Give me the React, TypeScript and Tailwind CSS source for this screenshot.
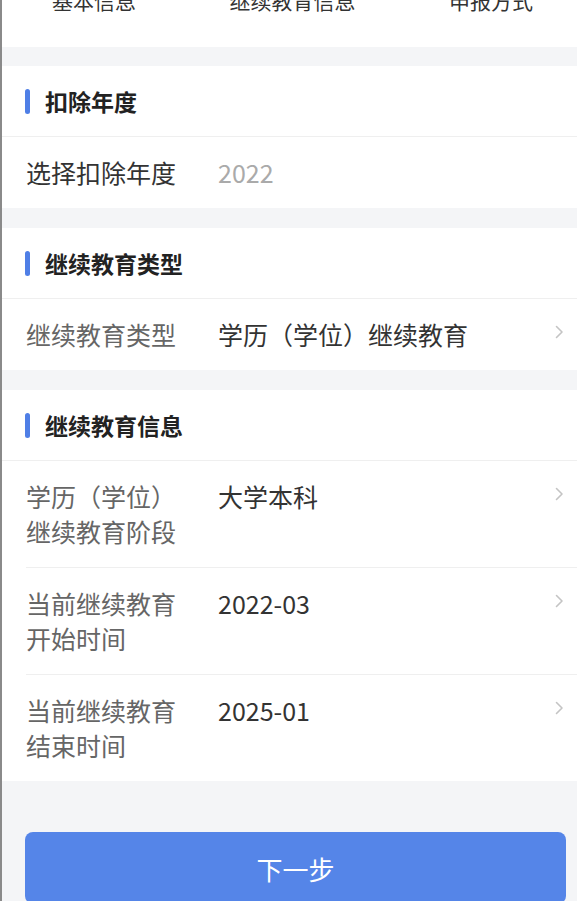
import { ReactNode } from "react";

const FONT = { fontFamily: '"Noto Sans CJK SC", "Noto Sans", sans-serif' };

function Chevron() {
    return (
        <svg width="9" height="14" viewBox="0 0 9 14" className="ml-auto mr-[13px] mt-[8px] shrink-0">
            <polyline points="1.5,1.5 7,7 1.5,12.5" fill="none" stroke="#c4c4c4" strokeWidth="1.6" strokeLinecap="round" strokeLinejoin="round" />
        </svg>
    );
}

function SectionHeader({ title }: { title: string }) {
    return (
        <div className="h-[71px] border-b border-[#efefef] flex items-center pl-[23px]">
            <div className="w-[5px] h-[25px] rounded-full bg-[#4f7fe6]" />
            <span className="ml-[15px] text-[23px] font-bold text-[#222]">{title}</span>
        </div>
    );
}

function Row({
    label,
    value,
    first,
    labelDark,
    valueMuted,
    arrow = true,
}: {
    label: ReactNode;
    value: string;
    first?: boolean;
    labelDark?: boolean;
    valueMuted?: boolean;
    arrow?: boolean;
}) {
    return (
        <div className={`ml-[24px] flex py-[18px] leading-[35px] text-[25px] ${first ? "" : "border-t border-[#efefef]"}`}>
            <div className={`w-[192px] pr-[34px] shrink-0 ${labelDark ? "text-[#333]" : "text-[#666]"}`}>{label}</div>
            <div className={valueMuted ? "text-[#aaa]" : "text-[#333]"}>{value}</div>
            {arrow && <Chevron />}
        </div>
    );
}

export default function App() {
    return (
        <div className="min-h-[901px] bg-[#f4f5f7] border-l-2 border-[#8a8a8a]" style={FONT}>
            {/* Step tabs, cut off at top */}
            <div className="h-[47px] bg-white overflow-hidden flex justify-between pl-[50px] pr-[44px] text-[21px] leading-[21px] text-[#333]">
                <span className="-mt-[10px]">基本信息</span>
                <span className="-mt-[10px]">继续教育信息</span>
                <span className="-mt-[10px]">申报方式</span>
            </div>

            <div className="mt-[19px] bg-white">
                <SectionHeader title="扣除年度" />
                <Row first labelDark label="选择扣除年度" value="2022" valueMuted arrow={false} />
            </div>

            <div className="mt-[20px] bg-white">
                <SectionHeader title="继续教育类型" />
                <Row first label="继续教育类型" value="学历（学位）继续教育" />
            </div>

            <div className="mt-[20px] bg-white">
                <SectionHeader title="继续教育信息" />
                <Row first label="学历（学位）继续教育阶段" value="大学本科" />
                <Row label="当前继续教育开始时间" value="2022-03" />
                <Row label="当前继续教育结束时间" value="2025-01" />
            </div>

            <div className="pt-[51px] pl-[23px] pr-[11px]">
                <button className="w-full h-[72px] rounded-[8px] bg-[#5585e8] text-white text-[26px]">下一步</button>
            </div>
        </div>
    );
}
